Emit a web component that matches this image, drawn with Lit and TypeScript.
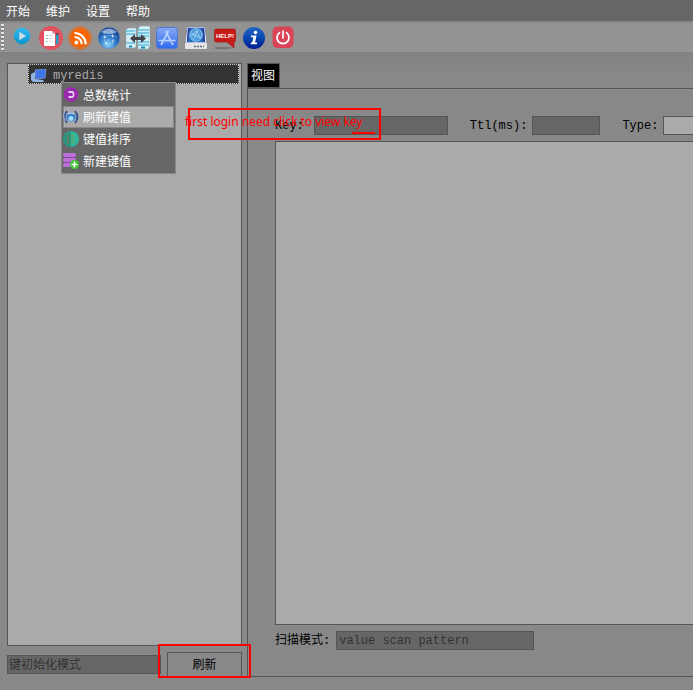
import { LitElement, html, css, svg } from "lit";
import { customElement, state } from "lit/decorators.js";
import { classMap } from "lit/directives/class-map.js";

const toolIcons = [
  {
    name: "运行",
    art: svg`<defs><linearGradient id="p" x2="0" y2="1"><stop stop-color="#35b8ee"/><stop offset="1" stop-color="#0795d0"/></linearGradient></defs>
      <ellipse cx="12" cy="21" rx="6" ry="1.6" fill="#7f9ba8" opacity=".7"/>
      <circle cx="12" cy="10" r="8.200" fill="url(#p)"/><path d="M9.300 5.800v8.400l6.800-4.200z" fill="#c9dde6"/>`,
  },
  {
    name: "文档",
    art: svg`<circle cx="12" cy="12" r="12" fill="#e3505f"/>
      <path d="M5 5h8l3 3v12H5z" fill="#fff"/><path d="M13 5v3h3z" fill="#d7c3c6"/>
      <path d="M7 9.500h2M7 12.500h2M7 15.500h2" stroke="#8cc7c4"/><path d="M10 9.500h4M10 12.500h4M10 15.500h4" stroke="#e3d5d8"/>
      <path d="M17 7h2.500v10l-1.200 2-1.300-2z" fill="#1f9ec4"/><path d="M17 7h2.500v2H17z" fill="#7b3f51"/>`,
  },
  {
    name: "订阅",
    art: svg`<circle cx="12" cy="12" r="11.300" fill="#a08a7c" stroke="#f1640c"/><circle cx="12" cy="12" r="10" fill="#f86400"/>
      <circle cx="8.300" cy="16.500" r="1.900" fill="#fff"/>
      <path d="M6.500 11a7 7 0 0 1 7.200 7.200M6.500 7a11 11 0 0 1 11.200 11.200" fill="none" stroke="#fff" stroke-width="2.200"/>`,
  },
  {
    name: "网络",
    art: svg`<defs><radialGradient id="g" cx=".45" cy=".8" r=".8"><stop stop-color="#8fd6fb"/><stop offset=".5" stop-color="#2b73c6"/><stop offset="1" stop-color="#12357c"/></radialGradient></defs>
      <circle cx="12" cy="12" r="10.800" fill="url(#g)" stroke="#6f8fb8" stroke-width=".6"/>
      <path d="M4 6q8-7 16 0q-8 4-16 0z" fill="#d6e7f5" opacity=".6"/>
      <path d="M4 12q8-5 16-1M8 5q-3 7 2 14M14 4q4 8 1 15" fill="none" stroke="#bfe2f8" stroke-width=".6" opacity=".6"/>
      <g fill="#e9f6ff"><circle cx="8" cy="11" r=".9"/><circle cx="15.500" cy="10" r=".9"/><circle cx="9" cy="17" r=".9"/><circle cx="16" cy="15" r=".8"/></g>`,
  },
  {
    name: "数据传输",
    art: svg`<g stroke="#8fb0ba" stroke-width=".5"><path d="M0 4l2-2h8v19l-2 1H0z" fill="#d5edf4"/><path d="M12 3l2-3h9l1 2v18l-2 3H12z" fill="#d5edf4"/></g>
      <path d="M0 5h9M0 8h9M0 17h9M12 4h11M12 7h11M12 10h11M12 16h11M12 19h11" stroke="#5fc0de" stroke-width="1.400"/>
      <path d="M3 20.500h3M15 21.500h4" stroke="#1b8fb8" stroke-width="2"/>
      <path d="M4 12.500l5-4.500v3h6V8l5 4.500-5 4.500v-3H9v3z" fill="#404448"/>`,
  },
  {
    name: "应用",
    art: svg`<defs><linearGradient id="a" x2="0" y2="1"><stop stop-color="#8aa8f3"/><stop offset=".5" stop-color="#5989f3"/><stop offset="1" stop-color="#2f69eb"/></linearGradient></defs>
      <rect x="1.500" y="1.500" width="21" height="21" rx="3" fill="url(#a)" stroke="#5278d4"/>
      <path d="M13.500 5L6 19M10.500 5L18 19M3.500 14.500h17" fill="none" stroke="#b8d1ff" stroke-width="1.700"/>
      <path d="M8 16h9" stroke="#759bef"/>`,
  },
  {
    name: "磁盘",
    art: svg`<path d="M3 1h18l2 16H1z" fill="#e3e7ef" stroke="#707a99" stroke-width=".7"/><path d="M4 2h16l1 14H3z" fill="#2370cb"/>
      <path d="M4 2h2L4 16H3zM18 2h2l1 14h-2z" fill="#263e98"/>
      <circle cx="12" cy="9" r="6.300" fill="#499bdc" stroke="#8fc3ea"/><path d="M7 11l5-6 5 7M7 7l9 5M9 14l5-10" fill="none" stroke="#c7e6f8" stroke-width=".7"/>
      <path d="M1 17h22v5q0 1-1 1H2q-1 0-1-1z" fill="#e5e5e8"/><path d="M10 20.500h10" stroke="#686878" stroke-width="1.500" stroke-dasharray="2 1"/>`,
  },
  {
    name: "帮助",
    art: svg`<ellipse cx="10" cy="22" rx="9" ry="1" fill="#737373"/><path d="M3 3h18q1.500 0 1.500 1.500v10q0 1.500-1.500 1.500v6l-7-6H3q-1.500 0-1.500-1.500v-10Q1.500 3 3 3z" fill="#c71b18" stroke="#a51613" stroke-width=".6"/>
      <text x="12" y="12" text-anchor="middle" font-family="Liberation Sans, sans-serif" font-size="6" font-weight="700" fill="#fff">HELP!</text>`,
  },
  {
    name: "关于",
    art: svg`<defs><linearGradient id="i" x2="0" y2="1"><stop stop-color="#2369c5"/><stop offset=".5" stop-color="#0647ae"/><stop offset="1" stop-color="#021c91"/></linearGradient></defs>
      <circle cx="12" cy="12" r="11" fill="url(#i)"/><circle cx="13.500" cy="6.500" r="1.800" fill="#fff"/>
      <path d="M9 9.500h5.500L13 16.500h2v1.700H8.800v-1.700h1.400l1.200-5.300H9z" fill="#fff"/>`,
  },
  {
    name: "退出",
    art: svg`<rect x="1.500" y=".5" width="21" height="21.500" rx="5" fill="#d94557"/>
      <path d="M8.500 6.700a6 6 0 1 0 7 0M12 5v7" fill="none" stroke="#fff" stroke-width="1.700" stroke-linecap="round"/>`,
  },
];

const contextItems = [
  {
    text: "总数统计",
    art: svg`<circle cx="8" cy="7.500" r="7.300" fill="#9c27b0"/><path d="M5.500 5h3.500q1.500 0 1.500 1.500v2Q10.500 10 9 10H5.500" fill="none" stroke="#e6cbed" stroke-width="1.800"/>`,
  },
  {
    text: "刷新键值",
    art: svg`<circle cx="8" cy="8" r="4.500" fill="#387dce"/><circle cx="8" cy="9.500" r="2.500" fill="#9fdcff"/><path d="M5 5q3-2 6 0" stroke="#d7ebff" fill="none"/>
      <path d="M4 2q-5 6 0 12M12 2q5 6 0 12" fill="none" stroke="#294b92" stroke-width="1.700"/><path d="M1 4q-1 4 1 8" stroke="#a2b9df" fill="none"/>`,
  },
  {
    text: "键值排序",
    art: svg`<circle cx="8" cy="8" r="8" fill="#30b69b"/><path d="M8 0a8 8 0 0 0 0 16z" fill="#2a927e"/><path d="M5 4v8m-1-1l1 1 1-1" stroke="#8e7143" fill="none"/><path d="M8 4h3M8 6.500h3M8 9h3M8 11.500h3" stroke="#79a653"/>`,
  },
  {
    text: "新建键值",
    art: svg`<g fill="#bd70da"><rect width="13" height="4" rx="2"/><rect y="5" width="13" height="4" rx="2"/><rect y="10" width="13" height="4" rx="2"/></g>
      <path d="M2 4.500h10M2 9.500h10" stroke="#804c99"/><circle cx="11.500" cy="11.500" r="4.500" fill="#3ec735"/><path d="M11.500 8.500v6m-3-3h6" stroke="#fff" stroke-width="1.500"/>`,
  },
];

@customElement("app-root")
export class AppRoot extends LitElement {
  @state() private active = 1;

  static styles = css`
    :host {
      display: flex;
      flex-direction: column;
      position: relative;
      height: 100vh;
      overflow: hidden;
      background: #888;
      color: #000;
      font: 12px/18px "Liberation Mono", "Noto Sans CJK SC", monospace;
    }
    * { box-sizing: border-box; }
    button, input, select, textarea {
      font: inherit;
      color: inherit;
      margin: 0;
      border-radius: 0;
      outline: none;
    }
    svg { display: block; flex: none; }
    .menubar {
      display: flex;
      flex: none;
      gap: 16px;
      height: 21px;
      padding: 4px 6px 0;
      background: #666;
    }
    .menubar button {
      height: 18px;
      border: 0;
      padding: 0;
      background: none;
      color: #fff;
    }
    .toolbar {
      display: flex;
      flex: none;
      align-items: center;
      gap: 5px;
      height: 31px;
      background: #939393;
      border-top: 2px solid #888;
    }
    .grip {
      width: 3px;
      height: 27px;
      margin: 0 1px 0 1px;
      background: repeating-linear-gradient(#e4e4e4 0 2px, #777 2px 3px, transparent 3px 4px);
    }
    .toolbar button {
      width: 24px;
      height: 24px;
      padding: 0;
      border: 0;
      background: none;
    }
    .main {
      display: flex;
      flex: 1;
      gap: 5px;
      min-height: 0;
      padding: 11px 0 13px 7px;
      background: linear-gradient(#828282, #888 24px);
    }
    .side {
      display: flex;
      flex-direction: column;
      flex: none;
      gap: 6px;
      width: 235px;
    }
    .tree {
      flex: 1;
      border: 1px solid #555;
      padding: 0 2px 0 20px;
      background: #aaa;
    }
    .node {
      display: flex;
      align-items: center;
      gap: 6px;
      height: 20px;
      padding: 3px 0 0 2px;
      border: 1px dotted #ccc;
      background: #333;
      color: #aaa;
    }
    .filter { display: flex; align-items: center; gap: 6px; }
    .field {
      height: 19px;
      min-width: 0;
      padding: 0 2px;
      border: 1px solid #555;
      background: #666;
    }
    .field::placeholder { color: #333; opacity: 1; }
    .filter .field { flex: 1; padding: 2px 2px 0 1px; }
    .marked { position: relative; width: 75px; }
    .marked::after {
      content: "";
      position: absolute;
      inset: -8px -9px -1px;
      border: 2px solid #f00;
      pointer-events: none;
    }
    .refresh {
      width: 100%;
      height: 25px;
      padding: 3px 0 0;
      border: 1px solid #555;
      background: #888;
      display: block;
    }
    .view { display: flex; flex-direction: column; flex: 1; min-width: 0; }
    .tab {
      align-self: flex-start;
      height: 25px;
      padding: 3px 4px 0 3px;
      border: 1px solid #555;
      background: #000;
      color: #fff;
    }
    .pane {
      display: flex;
      flex-direction: column;
      flex: 1;
      gap: 6px;
      min-height: 0;
      padding: 27px 0 26px 27px;
      border: solid #555;
      border-width: 1px 0 1px 1px;
    }
    .row { display: flex; align-items: center; gap: 22px; }
    .pair { display: flex; align-items: center; gap: 5px; flex: none; white-space: nowrap; }
    .pair.key { gap: 10px; }
    .pair.scan { gap: 6px; }
    .pair.type { flex: 1; }
    .w-key { width: 134px; }
    .w-ttl { width: 68px; }
    .w-scan { width: 198px; }
    .choice { flex: 1; appearance: none; border-right: 0; background: #aaa; }
    .value {
      flex: 1;
      width: 100%;
      border: 1px solid #555;
      border-right: 0;
      background: #aaa;
      resize: none;
    }
    .context {
      position: absolute;
      left: 61px;
      top: 82px;
      width: 115px;
      padding: 1px;
      border: 1px solid #888;
      background: #666;
    }
    .context button {
      display: flex;
      align-items: center;
      gap: 4px;
      width: 100%;
      height: 22px;
      padding: 0;
      border: 1px solid transparent;
      background: none;
      color: #fff;
    }
    .context svg { margin-left: -1px; }
    .context span { padding-top: 4px; }
    .context button.on { background: #aaa; border-color: #888; }
    .note {
      position: absolute;
      left: 188px;
      top: 108px;
      width: 193px;
      height: 32px;
      border: 2px solid #f00;
      color: #f00;
      font: 12px/24px "Noto Sans", sans-serif;
      white-space: nowrap;
      pointer-events: none;
    }
    .note span { display: block; margin-left: -5px; }
    .note::after {
      content: "";
      position: absolute;
      right: 4px;
      bottom: 4px;
      width: 23px;
      height: 2px;
      background: #f00;
    }
  `;

  render() {
    return html`
      <nav class="menubar">
        ${["开始", "维护", "设置", "帮助"].map((m) => html`<button>${m}</button>`)}
      </nav>
      <div class="toolbar">
        <span class="grip"></span>
        ${toolIcons.map(
          (t) => html`<button aria-label=${t.name}><svg width="24" height="24" viewBox="0 0 24 24">${t.art}</svg></button>`
        )}
      </div>
      <main class="main">
        <section class="side">
          <div class="tree" role="tree">
            <div class="node" role="treeitem" aria-selected="true">
              <svg width="16" height="14" viewBox="0 0 16 14">
                <path d="M0 5l4-2v7l8 1 1 2H2l-2-2z" fill="#8fb3e3" />
                <path d="M4 1l11-1-1 9-9 1z" fill="#3f74e6" stroke="#86aaf0" stroke-width=".6" />
              </svg>
              <span>myredis</span>
            </div>
          </div>
          <div class="filter">
            <input class="field" aria-label="键初始化模式" placeholder="键初始化模式" />
            <div class="marked"><button class="refresh">刷新</button></div>
          </div>
        </section>
        <section class="view">
          <button class="tab">视图</button>
          <div class="pane">
            <div class="row">
              <div class="pair key"><label for="key">Key:</label><input id="key" class="field w-key" /></div>
              <div class="pair"><label for="ttl">Ttl(ms):</label><input id="ttl" class="field w-ttl" /></div>
              <div class="pair type"><label for="type">Type:</label><select id="type" class="field choice"></select></div>
            </div>
            <textarea class="value" aria-label="值"></textarea>
            <div class="pair scan">
              <label for="scan">扫描模式:</label>
              <input id="scan" class="field w-scan" placeholder="value scan pattern" />
            </div>
          </div>
        </section>
      </main>
      <div class="context" role="menu">
        ${contextItems.map(
          (c, i) => html`<button
            role="menuitem"
            class=${classMap({ on: i === this.active })}
            @mouseenter=${() => (this.active = i)}
          ><svg width="16" height="16" viewBox="0 0 16 16">${c.art}</svg><span>${c.text}</span></button>`
        )}
      </div>
      <div class="note"><span>first login need click to view key</span></div>
    `;
  }
}
